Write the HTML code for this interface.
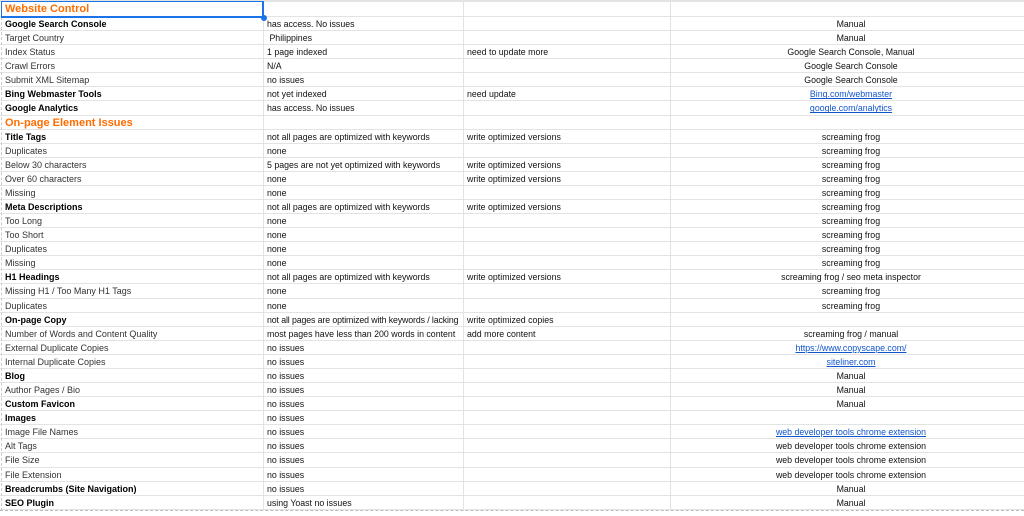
<!DOCTYPE html>
<html><head><meta charset="utf-8"><style>
*{margin:0;padding:0;box-sizing:border-box}
body{width:1024px;height:516px;overflow:hidden;background:#fff;font-family:"Liberation Sans",Arial,sans-serif;font-size:9px;color:#333;position:relative}
#top{position:absolute;left:0;top:0;width:1024px;height:2px;background:#e2e3e3}
.hdr{position:absolute;left:0;top:2px;width:1024px;height:15px;border-bottom:1px solid #e2e3e3}
#rows{position:absolute;left:0;top:17px;width:1040px}
.r{height:14.09px;position:relative;border-bottom:1px solid #e2e3e3}
.r div{position:absolute;top:0;height:14px;line-height:14px;white-space:nowrap;overflow:visible}
.a{left:5px}.b{left:267px;color:#111;font-size:8.8px}.c{left:467px;color:#111;font-size:8.8px}.d{left:670px;width:362px;text-align:center;color:#111;font-size:8.8px}
.v{position:absolute;top:2px;height:508px;width:1px;background:#e2e3e3}
b{color:#000}
.o{color:#ff6d01;font-weight:bold;font-size:11px}
a{color:#1155cc;text-decoration:underline}
#sel{position:absolute;left:1px;top:1px;width:263px;height:17px;border:2px solid #1a73e8;border-width:1px 2px 2px 1px}
#dot{position:absolute;left:261px;top:15px;width:6px;height:6px;border-radius:50%;background:#1a73e8}
#dash{position:absolute;left:0;top:510px;width:1024px;border-top:1px dashed #bbb}
#ldash{position:absolute;left:1px;top:17px;height:494px;border-left:1px dashed #ccc}
</style></head><body>
<div id="top"></div>
<div class="v" style="left:263px"></div>
<div class="v" style="left:463px"></div>
<div class="v" style="left:670px"></div>
<div class="hdr"><div style="position:absolute;left:5px;top:0;line-height:15px" class="o">Website Control</div></div>
<div id="rows">
<div class="r"><div class="a"><b>Google Search Console</b></div><div class="b">has access. No issues</div><div class="d">Manual</div></div>
<div class="r"><div class="a">Target Country</div><div class="b">&nbsp;Philippines</div><div class="d">Manual</div></div>
<div class="r"><div class="a">Index Status</div><div class="b">1 page indexed</div><div class="c">need to update more</div><div class="d">Google Search Console, Manual</div></div>
<div class="r"><div class="a">Crawl Errors</div><div class="b">N/A</div><div class="d">Google Search Console</div></div>
<div class="r"><div class="a">Submit XML Sitemap</div><div class="b">no issues</div><div class="d">Google Search Console</div></div>
<div class="r"><div class="a"><b>Bing Webmaster Tools</b></div><div class="b">not yet indexed</div><div class="c">need update</div><div class="d"><a>Bing.com/webmaster</a></div></div>
<div class="r"><div class="a"><b>Google Analytics</b></div><div class="b">has access. No issues</div><div class="d"><a>google.com/analytics</a></div></div>
<div class="r"><div class="a o">On-page Element Issues</div></div>
<div class="r"><div class="a"><b>Title Tags</b></div><div class="b">not all pages are optimized with keywords</div><div class="c">write optimized versions</div><div class="d">screaming frog</div></div>
<div class="r"><div class="a">Duplicates</div><div class="b">none</div><div class="d">screaming frog</div></div>
<div class="r"><div class="a">Below 30 characters</div><div class="b">5 pages are not yet optimized with keywords</div><div class="c">write optimized versions</div><div class="d">screaming frog</div></div>
<div class="r"><div class="a">Over 60 characters</div><div class="b">none</div><div class="c">write optimized versions</div><div class="d">screaming frog</div></div>
<div class="r"><div class="a">Missing</div><div class="b">none</div><div class="d">screaming frog</div></div>
<div class="r"><div class="a"><b>Meta Descriptions</b></div><div class="b">not all pages are optimized with keywords</div><div class="c">write optimized versions</div><div class="d">screaming frog</div></div>
<div class="r"><div class="a">Too Long</div><div class="b">none</div><div class="d">screaming frog</div></div>
<div class="r"><div class="a">Too Short</div><div class="b">none</div><div class="d">screaming frog</div></div>
<div class="r"><div class="a">Duplicates</div><div class="b">none</div><div class="d">screaming frog</div></div>
<div class="r"><div class="a">Missing</div><div class="b">none</div><div class="d">screaming frog</div></div>
<div class="r"><div class="a"><b>H1 Headings</b></div><div class="b">not all pages are optimized with keywords</div><div class="c">write optimized versions</div><div class="d">screaming frog / seo meta inspector</div></div>
<div class="r"><div class="a">Missing H1 / Too Many H1 Tags</div><div class="b">none</div><div class="d">screaming frog</div></div>
<div class="r"><div class="a">Duplicates</div><div class="b">none</div><div class="d">screaming frog</div></div>
<div class="r"><div class="a"><b>On-page Copy</b></div><div class="b" style="letter-spacing:-0.12px">not all pages are optimized with keywords / lacking</div><div class="c">write optimized copies</div></div>
<div class="r"><div class="a">Number of Words and Content Quality</div><div class="b">most pages have less than 200 words in content</div><div class="c">add more content</div><div class="d">screaming frog / manual</div></div>
<div class="r"><div class="a">External Duplicate Copies</div><div class="b">no issues</div><div class="d"><a>https://www.copyscape.com/</a></div></div>
<div class="r"><div class="a">Internal Duplicate Copies</div><div class="b">no issues</div><div class="d"><a>siteliner.com</a></div></div>
<div class="r"><div class="a"><b>Blog</b></div><div class="b">no issues</div><div class="d">Manual</div></div>
<div class="r"><div class="a">Author Pages / Bio</div><div class="b">no issues</div><div class="d">Manual</div></div>
<div class="r"><div class="a"><b>Custom Favicon</b></div><div class="b">no issues</div><div class="d">Manual</div></div>
<div class="r"><div class="a"><b>Images</b></div><div class="b">no issues</div></div>
<div class="r"><div class="a">Image File Names</div><div class="b">no issues</div><div class="d"><a>web developer tools chrome extension</a></div></div>
<div class="r"><div class="a">Alt Tags</div><div class="b">no issues</div><div class="d">web developer tools chrome extension</div></div>
<div class="r"><div class="a">File Size</div><div class="b">no issues</div><div class="d">web developer tools chrome extension</div></div>
<div class="r"><div class="a">File Extension</div><div class="b">no issues</div><div class="d">web developer tools chrome extension</div></div>
<div class="r"><div class="a"><b>Breadcrumbs (Site Navigation)</b></div><div class="b">no issues</div><div class="d">Manual</div></div>
<div class="r"><div class="a"><b>SEO Plugin</b></div><div class="b">using Yoast no issues</div><div class="d">Manual</div></div>
</div>
<div id="ldash"></div>
<div id="dash"></div>
<div id="sel"></div><div id="dot"></div>
</body></html>
